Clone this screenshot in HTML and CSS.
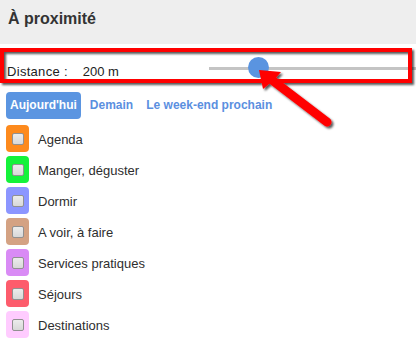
FILE: index.html
```html
<!DOCTYPE html>
<html lang="fr">
<head>
<meta charset="utf-8">
<title>À proximité</title>
<link rel="stylesheet" href="styles.css">
</head>
<body>
<div class="page">
  <div class="header">À proximité</div>
  <div class="distance">
    <span class="label">Distance :</span>
    <span class="value">200 m</span>
    <div class="slider">
      <div class="track"></div>
      <div class="thumb"></div>
    </div>
  </div>
  <div class="tabs">
    <span class="tab active">Aujourd'hui</span>
    <span class="tab">Demain</span>
    <span class="tab">Le week-end prochain</span>
  </div>
  <ul class="cats">
    <li class="cat"><span class="swatch c1"><span class="box"></span></span><span class="name">Agenda</span></li>
    <li class="cat"><span class="swatch c2"><span class="box"></span></span><span class="name">Manger, déguster</span></li>
    <li class="cat"><span class="swatch c3"><span class="box"></span></span><span class="name">Dormir</span></li>
    <li class="cat"><span class="swatch c4"><span class="box"></span></span><span class="name">A voir, à faire</span></li>
    <li class="cat"><span class="swatch c5"><span class="box"></span></span><span class="name">Services pratiques</span></li>
    <li class="cat"><span class="swatch c6"><span class="box"></span></span><span class="name">Séjours</span></li>
    <li class="cat"><span class="swatch c7"><span class="box"></span></span><span class="name">Destinations</span></li>
  </ul>
  <svg class="annot" width="416" height="349" viewBox="0 0 416 349">
    <defs>
      <filter id="sh" x="-10%" y="-10%" width="130%" height="130%">
        <feDropShadow dx="2" dy="2" stdDeviation="1" flood-color="#000" flood-opacity="0.65"/>
      </filter>
    </defs>
    <g filter="url(#sh)">
      <rect x="2" y="50" width="408" height="31" fill="none" stroke="#ff0000" stroke-width="4"/>
      <line x1="272" y1="80" x2="327" y2="122" stroke="#ff0000" stroke-width="9" stroke-linecap="round"/>
      <polygon points="259,70 281,72 274,80 263,89" fill="#ff0000"/>
    </g>
  </svg>
</div>
</body>
</html>
```

FILE: styles.css
```css
* { box-sizing: border-box; }
html, body { margin: 0; padding: 0; background: #fff; }
body {
  font-family: "Liberation Sans", Arial, sans-serif;
  color: #333;
  width: 416px;
  height: 349px;
  overflow: hidden;
}
.page { position: relative; width: 416px; height: 349px; }
.header {
  height: 44px;
  background: #eeeeee;
  padding: 10px 0 0 8px;
  font-size: 16px;
  line-height: 18px;
  font-weight: bold;
  color: #333;
}
.distance {
  display: flex;
  align-items: flex-start;
  padding: 13px 0 0 7px;
  font-size: 13px;
  line-height: 15px;
  color: #222;
}
.label { margin-top: 7px; letter-spacing: 0.3px; }
.value { margin-top: 7px; margin-left: 15px; }
.slider {
  position: relative;
  flex: 1;
  height: 20px;
  margin-left: 90px;
}
.track {
  margin-top: 10px;
  height: 3px;
  background: #c4c4c4;
}
.thumb {
  position: absolute;
  left: 39px;
  top: 0;
  width: 21px;
  height: 21px;
  border-radius: 50%;
  background: #5a94e0;
}
.tabs {
  display: flex;
  gap: 5px;
  margin-top: 13px;
  padding-left: 6px;
}
.tab {
  height: 27px;
  line-height: 27px;
  padding: 0 4px;
  font-size: 12px;
  font-weight: bold;
  color: #5b8fdf;
  border-radius: 4px;
}
.tab.active { background: #5b95e1; color: #fff; }
.cats {
  list-style: none;
  margin: 6px 0 0 0;
  padding: 0 0 0 6px;
  display: flex;
  flex-direction: column;
  gap: 4px;
}
.cat {
  display: flex;
  align-items: center;
  height: 27px;
  font-size: 13px;
  color: #2e2e2e;
}
.name { padding-top: 2px; }
.swatch {
  width: 23px;
  height: 27px;
  border-radius: 4px;
  display: flex;
  align-items: center;
  justify-content: center;
  margin-right: 9px;
}
.box {
  width: 12px;
  height: 12px;
  border: 1px solid #919191;
  border-radius: 2px;
  background: linear-gradient(#ececec, #d8d8d8);
}
.c1 { background: #fd8a1d; }
.c2 { background: #14f23a; }
.c3 { background: #8c96ff; }
.c4 { background: #d4a283; }
.c5 { background: #d98bf5; }
.c6 { background: #fd5c6c; }
.c7 { background: #ffccff; }
.annot { position: absolute; left: 0; top: 0; pointer-events: none; }
```
